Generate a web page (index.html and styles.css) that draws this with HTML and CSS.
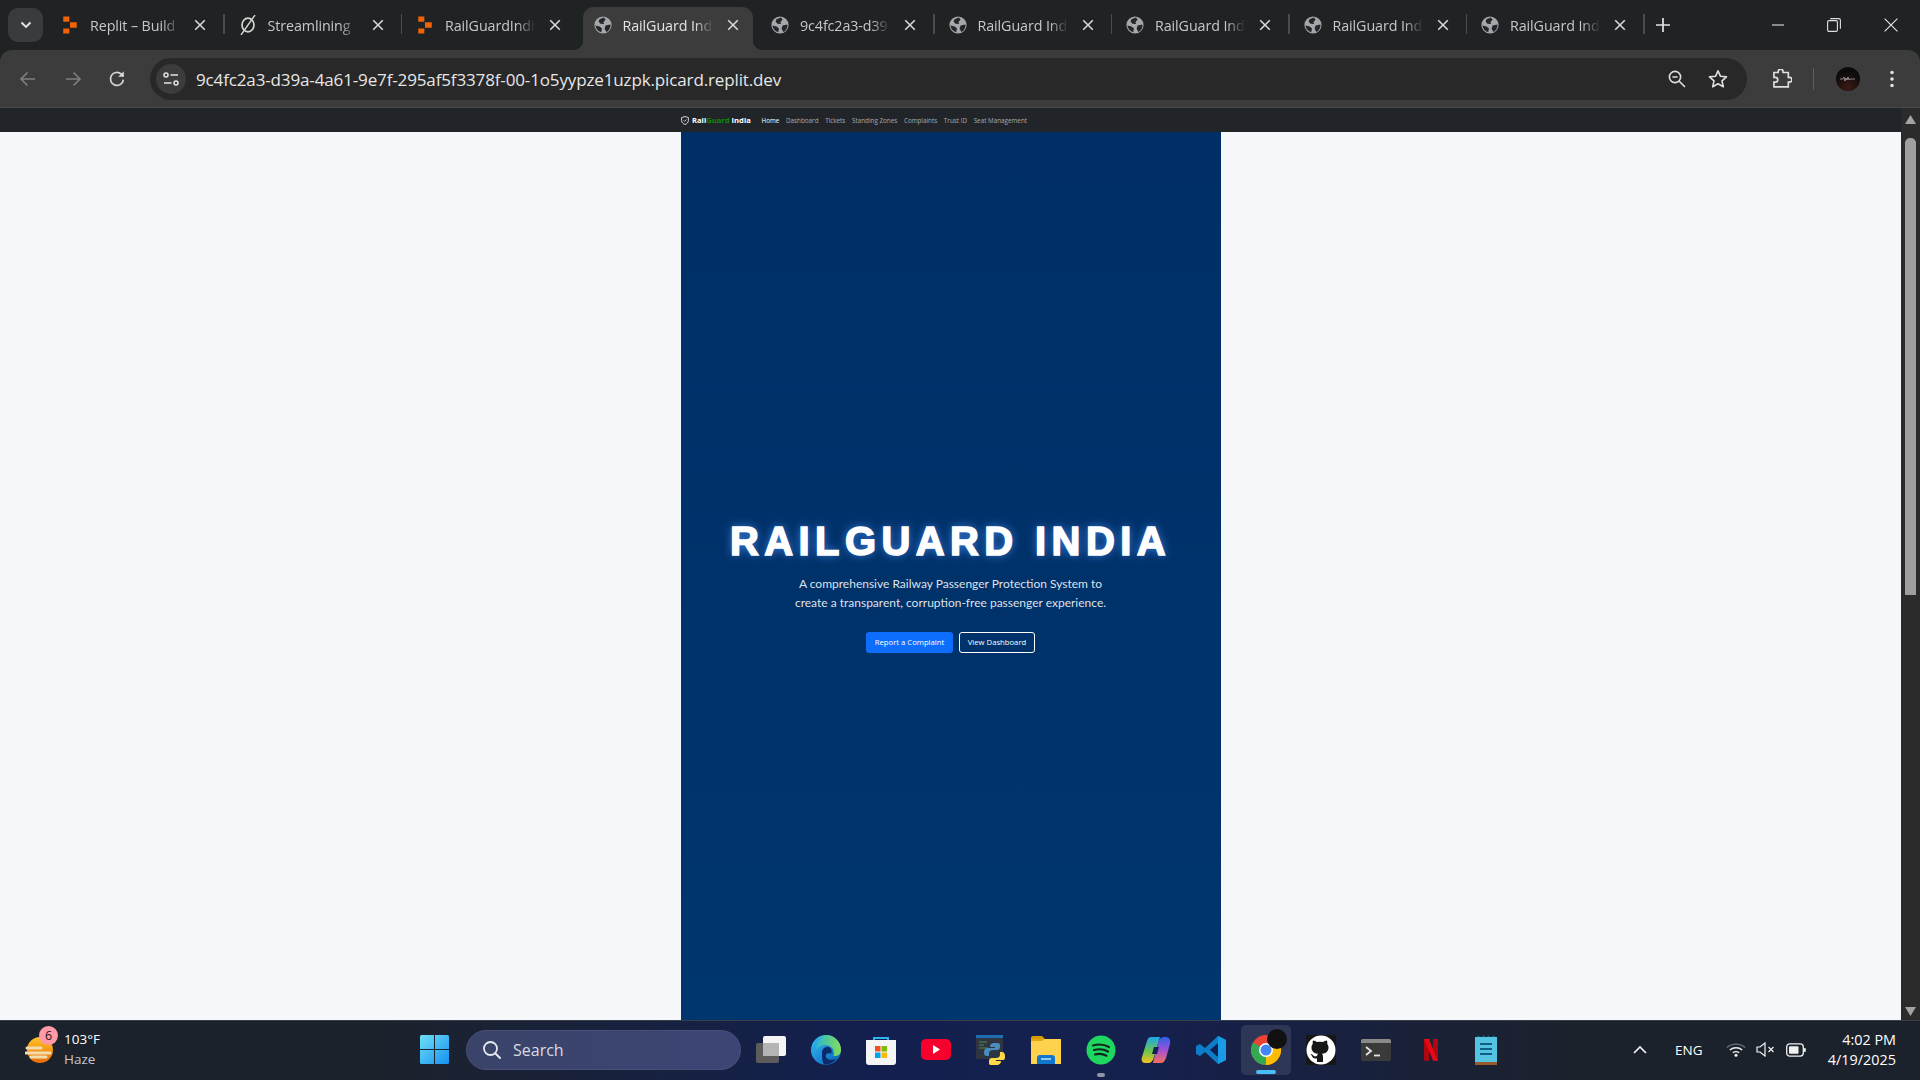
FILE: index.html
```html
<!DOCTYPE html>
<html lang="en">
<head>
<meta charset="utf-8">
<title>RailGuard India</title>
<link rel="stylesheet" href="styles.css">
</head>
<body>
<svg class="defs" width="0" height="0" aria-hidden="true">
  <symbol id="globe" viewBox="0 0 18 18">
    <circle cx="9" cy="9" r="8.6" fill="#a4a8ad"/>
    <path d="M5.500 3.200 9.800 1.400 11.600 3.600 9.400 6.200 10.200 8 6.400 7.800 4.600 5.600Z" fill="#23272a"/>
    <path d="M11.600 9.400 16.400 8.400C16.800 11.400 15 14.600 12.400 16L10.600 12.800Z" fill="#23272a"/>
    <path d="M1.400 9.600 5.600 10.400 8 12.600 7.200 16.300C4 15.500 1.800 13 1.400 9.600Z" fill="#23272a"/>
  </symbol>
  <symbol id="replit" viewBox="0 0 14 16">
    <path d="M1 .5h5.400v4.600H1zM7 5.600h6v4.800H7zM1 11h5.400v4.600H1z" fill="#f26207"/>
  </symbol>
  <symbol id="close" viewBox="0 0 12 12">
    <path d="M1.200 1.200 10.800 10.800M10.800 1.200 1.200 10.800" stroke="#d7d7d7" stroke-width="1.600" fill="none"/>
  </symbol>
</svg>

<header class="tabstrip">
  <button class="tab-search"><svg width="12" height="8" viewBox="0 0 12 8"><path d="M1.500 1.500 6 6l4.500-4.500" fill="none" stroke="#e4e4e4" stroke-width="1.900"/></svg></button>
  <div class="tab"><svg class="tab-icon" width="18" height="18"><use href="#replit"/></svg><span class="tab-title">Replit – Build</span><svg class="tab-close" width="12" height="12"><use href="#close"/></svg></div>
  <i class="tab-sep"></i>
  <div class="tab"><svg class="tab-icon" width="18" height="20" viewBox="0 0 18 20"><ellipse cx="9" cy="10" rx="6" ry="6.800" fill="none" stroke="#d4d4d4" stroke-width="1.700"/><path d="M16 0 2 20" stroke="#d4d4d4" stroke-width="1.400"/></svg><span class="tab-title">Streamlining</span><svg class="tab-close" width="12" height="12"><use href="#close"/></svg></div>
  <i class="tab-sep"></i>
  <div class="tab"><svg class="tab-icon" width="18" height="18"><use href="#replit"/></svg><span class="tab-title">RailGuardIndi</span><svg class="tab-close" width="12" height="12"><use href="#close"/></svg></div>
  <i class="tab-sep off"></i>
  <div class="tab active"><svg class="tab-icon" width="18" height="18"><use href="#globe"/></svg><span class="tab-title">RailGuard Ind</span><svg class="tab-close" width="12" height="12"><use href="#close"/></svg></div>
  <i class="tab-sep off"></i>
  <div class="tab"><svg class="tab-icon" width="18" height="18"><use href="#globe"/></svg><span class="tab-title">9c4fc2a3-d39</span><svg class="tab-close" width="12" height="12"><use href="#close"/></svg></div>
  <i class="tab-sep"></i>
  <div class="tab"><svg class="tab-icon" width="18" height="18"><use href="#globe"/></svg><span class="tab-title">RailGuard Ind</span><svg class="tab-close" width="12" height="12"><use href="#close"/></svg></div>
  <i class="tab-sep"></i>
  <div class="tab"><svg class="tab-icon" width="18" height="18"><use href="#globe"/></svg><span class="tab-title">RailGuard Ind</span><svg class="tab-close" width="12" height="12"><use href="#close"/></svg></div>
  <i class="tab-sep"></i>
  <div class="tab"><svg class="tab-icon" width="18" height="18"><use href="#globe"/></svg><span class="tab-title">RailGuard Ind</span><svg class="tab-close" width="12" height="12"><use href="#close"/></svg></div>
  <i class="tab-sep"></i>
  <div class="tab"><svg class="tab-icon" width="18" height="18"><use href="#globe"/></svg><span class="tab-title">RailGuard Ind</span><svg class="tab-close" width="12" height="12"><use href="#close"/></svg></div>
  <i class="tab-sep"></i>
  <svg class="tab-new" width="14" height="14" viewBox="0 0 14 14"><path d="M7 0v14M0 7h14" stroke="#e4e4e4" stroke-width="1.700"/></svg>
  <div class="window-controls">
    <svg width="12" height="12" viewBox="0 0 12 12"><path d="M0 6h12" stroke="#e0e0e0" stroke-width="1.100"/></svg>
    <svg width="14" height="14" viewBox="0 0 14 14"><rect x=".6" y="2.600" width="9.800" height="10.800" rx="1.400" fill="none" stroke="#e0e0e0" stroke-width="1.100"/><path d="M3.200.6h8.600a1.600 1.600 0 0 1 1.600 1.600v8.600" fill="none" stroke="#e0e0e0" stroke-width="1.100"/></svg>
    <svg width="14" height="14" viewBox="0 0 14 14"><path d="M.6.6l12.800 12.800M13.400.6.6 13.400" stroke="#e8e8e8" stroke-width="1.100"/></svg>
  </div>
</header>

<div class="toolbar">
  <div class="nav-buttons">
    <svg width="18" height="16" viewBox="0 0 18 16"><path d="M16 8H2M8.500 1.500 2 8l6.500 6.500" fill="none" stroke="#7d7d7d" stroke-width="1.700"/></svg>
    <svg width="18" height="16" viewBox="0 0 18 16"><path d="M2 8h14M9.500 1.500 16 8l-6.500 6.500" fill="none" stroke="#7d7d7d" stroke-width="1.700"/></svg>
    <svg width="18" height="18" viewBox="0 0 18 18"><path d="M15.400 9.600A6.500 6.500 0 1 1 13.400 4.200L15.600 6.200" fill="none" stroke="#d6d6d6" stroke-width="1.700"/><path d="M15.800 1.200v5.600h-5.600z" fill="#d6d6d6"/></svg>
  </div>
  <div class="omnibox">
    <span class="site-info"><svg width="16" height="14" viewBox="0 0 16 14"><circle cx="3" cy="3" r="2" fill="none" stroke="#e3e3e3" stroke-width="1.500"/><path d="M7.500 3H15M1 11h7.500" stroke="#e3e3e3" stroke-width="1.500"/><circle cx="13" cy="11" r="2" fill="none" stroke="#e3e3e3" stroke-width="1.500"/></svg></span>
    <span class="url">9c4fc2a3-d39a-4a61-9e7f-295af5f3378f-00-1o5yypze1uzpk.picard.replit.dev</span>
    <svg class="omni-zoom" width="18" height="18" viewBox="0 0 18 18"><circle cx="7" cy="7" r="5.600" fill="none" stroke="#e0e0e0" stroke-width="1.600"/><path d="M4.400 7h5.200M11 11l6 6" stroke="#e0e0e0" stroke-width="1.600"/></svg>
    <svg class="omni-star" width="20" height="20" viewBox="0 0 20 20"><path d="M10 1.800l2.500 5.500 6 .6-4.500 4 1.300 5.900L10 14.800l-5.300 3 1.300-5.900-4.500-4 6-.6z" fill="none" stroke="#e0e0e0" stroke-width="1.600" stroke-linejoin="round"/></svg>
  </div>
  <svg class="ext" width="20" height="20" viewBox="0 0 20 20"><path d="M2 4h4.500V3a2.500 2.500 0 0 1 5 0v1H17v5h1.200a2.500 2.500 0 0 1 0 5H17v5H2v-5h1.500a2.500 2.500 0 0 0 0-5H2z" transform="translate(0 -.3) scale(.96)" fill="none" stroke="#e0e0e0" stroke-width="1.700"/></svg>
  <i class="toolbar-sep"></i>
  <span class="avatar"><svg width="16" height="6" viewBox="0 0 16 6"><path d="M0 3h3l1-2 1 4 1-3 1 2 1-3 1 3 1-1h5" fill="none" stroke="#b9b9b9" stroke-width=".7"/></svg></span>
  <svg class="kebab" width="4" height="18" viewBox="0 0 4 18"><circle cx="2" cy="2.500" r="1.800" fill="#e0e0e0"/><circle cx="2" cy="9" r="1.800" fill="#e0e0e0"/><circle cx="2" cy="15.500" r="1.800" fill="#e0e0e0"/></svg>
</div>

<div class="viewport">
  <main class="page">
    <nav class="site-nav">
      <svg class="brand-icon" width="8" height="9" viewBox="0 0 8 9"><path d="M4 .5 7.400 1.600V4.500C7.400 6.500 5.800 7.900 4 8.500 2.200 7.900.6 6.500.6 4.500V1.600Z" fill="none" stroke="#fff" stroke-width=".8"/><path d="M2.600 4.300 3.700 5.400 5.500 3.400" fill="none" stroke="#fff" stroke-width=".7"/></svg>
      <span class="brand"><b class="rail">Rail</b><b class="guard">Guard</b> <b class="rail">India</b></span>
      <a class="nav-link current">Home</a>
      <a class="nav-link">Dashboard</a>
      <a class="nav-link">Tickets</a>
      <a class="nav-link">Standing Zones</a>
      <a class="nav-link">Complaints</a>
      <a class="nav-link">Trust ID</a>
      <a class="nav-link">Seat Management</a>
    </nav>
    <section class="canvas">
      <div class="hero">
        <h1 class="hero-title">RAILGUARD INDIA</h1>
        <p class="hero-sub">A comprehensive Railway Passenger Protection System to<br>create a transparent, corruption-free passenger experience.</p>
        <div class="hero-actions">
          <a class="btn btn-primary">Report a Complaint</a>
          <a class="btn btn-outline">View Dashboard</a>
        </div>
      </div>
    </section>
  </main>
  <aside class="scrollbar">
    <svg width="11" height="9" viewBox="0 0 11 9"><path d="M5.500 0 11 9H0z" fill="#a3a3a3"/></svg>
    <div class="scroll-track"><div class="scroll-thumb"></div></div>
    <svg width="11" height="9" viewBox="0 0 11 9"><path d="M5.500 9 11 0H0z" fill="#a3a3a3"/></svg>
  </aside>
</div>

<footer class="taskbar">
  <div class="weather">
    <span class="weather-icon">
      <svg width="28" height="28" viewBox="0 0 28 28"><defs><linearGradient id="sun" x1="0" y1="0" x2="0" y2="1"><stop offset="0" stop-color="#ffc526"/><stop offset="1" stop-color="#ea6a0a"/></linearGradient></defs><circle cx="15" cy="14" r="13" fill="url(#sun)"/><path d="M2 12h14M1 17h24M6 21h15" stroke="#f2dcae" stroke-width="3" stroke-linecap="round"/></svg>
      <b class="badge">6</b>
    </span>
    <span class="weather-text"><span class="temp">103°F</span><span class="cond">Haze</span></span>
  </div>
  <div class="task-center">
    <svg class="win" width="29" height="29" viewBox="0 0 29 29"><defs><linearGradient id="w1" x1="0" y1="0" x2="1" y2="1"><stop offset="0" stop-color="#6fe0f5"/><stop offset="1" stop-color="#1592f2"/></linearGradient></defs><path d="M0 1.500A1.500 1.500 0 0 1 1.500 0H14v14H0zM15 0h12.500A1.500 1.500 0 0 1 29 1.500V14H15zM0 15h14v14H1.500A1.500 1.500 0 0 1 0 27.500zM15 15h14v12.500a1.500 1.500 0 0 1-1.500 1.500H15z" fill="url(#w1)"/></svg>
    <div class="search"><svg width="20" height="20" viewBox="0 0 20 20"><circle cx="8.500" cy="8.500" r="6.500" fill="none" stroke="#e6e8ef" stroke-width="1.800"/><path d="M13.200 13.200 18 18" stroke="#e6e8ef" stroke-width="2" stroke-linecap="round"/></svg><span>Search</span></div>
    <div class="app"><svg width="30" height="30" viewBox="0 0 30 30"><rect x="0" y="8" width="23" height="20" rx="2" fill="#5c5c5c"/><rect x="7" y="1" width="23" height="20" rx="2" fill="#f4f4f4"/><rect x="7" y="8" width="16" height="13" fill="#b4b4b4"/></svg></div>
    <div class="app"><svg width="30" height="30" viewBox="0 0 30 30"><defs><linearGradient id="e1" x1="0" y1="0" x2="1" y2="1"><stop offset="0" stop-color="#35c1f1"/><stop offset=".6" stop-color="#1a83d4"/><stop offset="1" stop-color="#0c59a4"/></linearGradient><linearGradient id="e2" x1="0" y1="0" x2="1" y2="0"><stop offset="0" stop-color="#2bb9c9"/><stop offset="1" stop-color="#86dc5a"/></linearGradient></defs><circle cx="15" cy="15" r="15" fill="url(#e1)"/><path d="M15 0A15 15 0 0 1 30 15C30 20 26 21.500 22.500 21 24.500 15 20 9.500 14 10 9 10.500 6 13 5 15 6 7 10 0 15 0Z" fill="url(#e2)"/><path d="M11 18C11 13 15 11 18 12 21 13.500 21.500 17 20 18.500 17 17.500 14 19 15 22 16 25 21 25.500 25 24 22 28 17 30 13 29.500 11 26 11 22 11 18Z" fill="#0e2a6b"/></svg></div>
    <div class="app"><svg width="30" height="30" viewBox="0 0 30 30"><path d="M8 7V3h14v4" fill="none" stroke="#2cb6f0" stroke-width="2"/><path d="M0 5h30v22a3 3 0 0 1-3 3H3a3 3 0 0 1-3-3z" fill="#f5f5f5"/><rect x="9" y="11" width="5.500" height="5.500" fill="#f25022"/><rect x="15.500" y="11" width="5.500" height="5.500" fill="#7fba00"/><rect x="9" y="17.500" width="5.500" height="5.500" fill="#00a4ef"/><rect x="15.500" y="17.500" width="5.500" height="5.500" fill="#ffb900"/></svg></div>
    <div class="app"><svg width="30" height="22" viewBox="0 0 30 22"><rect width="30" height="21" rx="5" fill="#f8002e"/><path d="M12 6l7 4.500-7 4.500z" fill="#fff"/></svg></div>
    <div class="app"><svg width="30" height="30" viewBox="0 0 30 30"><rect width="27" height="24" fill="#2e3440"/><rect width="27" height="3" fill="#1f6fb0"/><path d="M3 7h8M3 10h5M3 13h9" stroke="#4f8a4a" stroke-width="1"/><path d="M19 8c-4 0-5 2-5 4h5v1h-7c-3 0-4 2-4 4 0 3 1 4 3 4h2v-3c0-2 2-3 4-3h4c2 0 3-1 3-3v-2c0-2-2-2-5-2z" fill="#4b8bbe"/><path d="M20 30c4 0 5-2 5-4h-5v-1h7c2 0 2-2 2-4s-1-4-3-4h-2v3c0 2-2 3-4 3h-4c-2 0-3 1-3 3v2c0 3 3 2 7 2z" fill="#ffd845"/></svg></div>
    <div class="app"><svg width="30" height="28" viewBox="0 0 30 28"><path d="M0 2a2 2 0 0 1 2-2h9l3 3H0z" fill="#d89b00"/><path d="M0 3h30v25H0z" fill="#ffd24d"/><path d="M0 3h14l-3 2H0z" fill="#e3a90f"/><path d="M6 28v-6a3 3 0 0 1 3-3h12a3 3 0 0 1 3 3v6z" fill="#0f78cc"/><path d="M10 23h10" stroke="#bde3ff" stroke-width="1.500"/></svg></div>
    <div class="app running"><svg width="30" height="30" viewBox="0 0 30 30"><circle cx="15" cy="15" r="14.500" fill="#1ed760"/><path d="M7 10.500c5-1.500 11.500-1 16 1.500M8 15c4.500-1.200 10-.8 14 1.500M9 19.500c3.600-1 8-.7 11.500 1.200" fill="none" stroke="#12261a" stroke-width="2.200" stroke-linecap="round"/></svg></div>
    <div class="app"><svg width="30" height="30" viewBox="0 0 30 30"><defs><linearGradient id="c1" x1="0" y1="0" x2="0" y2="1"><stop offset="0" stop-color="#1fa6ea"/><stop offset=".55" stop-color="#6cc64a"/><stop offset="1" stop-color="#f8bf22"/></linearGradient><linearGradient id="c2" x1="0" y1="0" x2="0" y2="1"><stop offset="0" stop-color="#2b63e8"/><stop offset=".5" stop-color="#a050d8"/><stop offset="1" stop-color="#f8705a"/></linearGradient></defs><path d="M10 2h9l-6 20c-1 4-3 6-6 6H4c-3 0-4-3-3-6L6 6c1-3 2-4 4-4Z" fill="url(#c1)"/><path d="M20 28h-8l5-20c1-4 3-6 6-6h2c3 0 5 3 4 7l-4 14c-1 3-3 5-5 5Z" fill="url(#c2)"/><path d="M13 12h5l-2 7h-5z" fill="#14205a"/></svg></div>
    <div class="app"><svg width="30" height="30" viewBox="0 0 30 30"><path d="M22 1 30 5v20l-8 4L9 17l-5 4-4-2v-8l4-2 5 4Z" fill="#0e7dc9"/><path d="M22 1 30 5v20l-8 4z" fill="#1a9be6"/><path d="M22 8 14 15l8 7z" fill="#0e2050"/></svg></div>
    <div class="app chrome-app"><span class="chrome-tile"><svg width="30" height="30" viewBox="0 0 30 30"><circle cx="15" cy="15" r="15" fill="#ea4335"/><path d="M15 15 2 7.500A15 15 0 0 0 15 30z" fill="#34a853"/><path d="M15 15 28 7.500A15 15 0 0 1 15 30z" fill="#fbbc05"/><circle cx="15" cy="15" r="7" fill="#fff"/><circle cx="15" cy="15" r="5.500" fill="#4285f4"/></svg><i class="chrome-badge"></i><i class="chrome-active"></i></span></div>
    <div class="app"><svg width="30" height="30" viewBox="0 0 30 30"><rect width="30" height="30" fill="#171717"/><circle cx="15" cy="15" r="14.500" fill="#fff"/><path d="M11 27v-3.500c-3.500.5-4.500-1-5-2.500-.5-1-1-1.500-1.500-2 1-.3 2 .3 2.800 1.600.7 1 2.200 1 3.700.4.100-1 .5-1.700 1-2.200-4-.5-6.500-2.300-6.500-6.300 0-1.400.5-2.600 1.300-3.500-.2-.8-.3-2 .3-3.500 1.500 0 2.800.8 3.800 1.600a12 12 0 0 1 6.200 0c1-.8 2.300-1.600 3.800-1.600.6 1.500.5 2.700.3 3.500.8.900 1.300 2.100 1.300 3.500 0 4-2.500 5.800-6.500 6.300.6.600 1 1.500 1 3V27z" fill="#171717"/></svg></div>
    <div class="app"><svg width="30" height="22" viewBox="0 0 30 22"><rect width="30" height="22" rx="2" fill="#3a3a3a"/><path d="M0 2a2 2 0 0 1 2-2h26a2 2 0 0 1 2 2v2H0z" fill="#8a8a8a"/><path d="M5 8l5 4-5 4" fill="none" stroke="#e4e4e4" stroke-width="1.800"/><path d="M13 16.500h6" stroke="#e4e4e4" stroke-width="1.800"/></svg></div>
    <div class="app"><svg width="14" height="22" viewBox="0 0 14 22"><path d="M0 0h5v22l-5-.7zM9 0h5v21.300L9 22z" fill="#b1060f"/><path d="M0 0h5l9 22-5-.6z" fill="#e50914"/></svg></div>
    <div class="app"><svg width="22" height="30" viewBox="0 0 22 30"><rect y="2" width="22" height="26" fill="#55c3e2"/><rect y="27" width="22" height="3" fill="#9a5a2c"/><path d="M2 2a1.500 1.500 0 0 1 3 0M7 2a1.500 1.500 0 0 1 3 0M12 2a1.500 1.500 0 0 1 3 0M17 2a1.500 1.500 0 0 1 3 0" fill="#0e5f86"/><path d="M5 9h12M5 14h12M5 19h12" stroke="#115f88" stroke-width="1.800"/></svg></div>
  </div>
  <div class="tray">
    <svg class="tray-chev" width="14" height="9" viewBox="0 0 14 9"><path d="M1 8 7 2l6 6" fill="none" stroke="#f0f0f0" stroke-width="1.700"/></svg>
    <span class="lang">ENG</span>
    <svg class="tray-wifi" width="20" height="15" viewBox="0 0 20 15"><path d="M1 5.500C6 1 14 1 19 5.500" fill="none" stroke="#6c7078" stroke-width="1.400"/><path d="M3.800 8c3.500-3 9-3 12.400 0M6.800 10.800c2-1.500 4.400-1.500 6.400 0" fill="none" stroke="#f0f0f0" stroke-width="1.400"/><circle cx="10" cy="13.300" r="1.500" fill="#f0f0f0"/></svg>
    <svg class="tray-vol" width="20" height="15" viewBox="0 0 20 15"><path d="M1 5h3l5-4v13l-5-4H1z" fill="none" stroke="#f0f0f0" stroke-width="1.200"/><path d="M12.500 5l5 5M17.500 5l-5 5" stroke="#f0f0f0" stroke-width="1.200"/></svg>
    <svg class="tray-bat" width="20" height="14" viewBox="0 0 20 14"><rect x=".7" y=".9" width="16.600" height="12.200" rx="3" fill="none" stroke="#f0f0f0" stroke-width="1.300"/><rect x="3" y="3.200" width="9.500" height="7.600" rx="1" fill="#f0f0f0"/><rect x="18" y="5" width="1.800" height="4" rx=".8" fill="#f0f0f0"/></svg>
    <span class="clock"><span>4:02 PM</span><span>4/19/2025</span></span>
  </div>
</footer>
</body>
</html>
```

FILE: styles.css
```css
* { box-sizing: border-box; }
html, body { margin: 0; height: 100%; overflow: hidden; }
body {
  display: flex;
  flex-direction: column;
  height: 1080px;
  font-family: "Open Sans", "Noto Sans", sans-serif;
  background: #202324;
}
.defs { position: absolute; }

/* Browser tab strip */
.tabstrip {
  height: 50px;
  flex: none;
  display: flex;
  align-items: flex-end;
  padding-left: 8px;
  background: #202324;
}
.tab-search {
  width: 35px;
  height: 34px;
  margin: 0 4px 8px 0;
  border: 0;
  padding: 0;
  border-radius: 10px;
  background: #3a3b3c;
  display: flex;
  align-items: center;
  justify-content: center;
}
.tab {
  width: 176px;
  height: 43px;
  display: flex;
  align-items: center;
  padding: 0 0 7px 14px;
  flex: none;
  position: relative;
}
.tab-icon { flex: none; }
.tab-title {
  width: 94px;
  flex: none;
  margin-left: 11px;
  font-size: 14.300px;
  letter-spacing: -.1px;
  color: #c6c7c8;
  white-space: nowrap;
  -webkit-mask-image: linear-gradient(90deg, #000 76%, transparent 96%);
  mask-image: linear-gradient(90deg, #000 76%, transparent 96%);
}
.tab-close { margin-left: 10px; flex: none; }
.tab.active {
  width: 170px;
  margin: 0 3px;
  padding-left: 11px;
  background: #3c3c3c;
  border-radius: 11px 11px 0 0;
}
.tab.active .tab-title { color: #e3e3e3; }
.tab.active::before,
.tab.active::after {
  content: "";
  position: absolute;
  bottom: 0;
  width: 10px;
  height: 10px;
}
.tab.active::before { left: -10px; background: radial-gradient(circle at 0 0, transparent 10px, #3c3c3c 10.500px); }
.tab.active::after { right: -10px; background: radial-gradient(circle at 100% 0, transparent 10px, #3c3c3c 10.500px); }
.tab-sep {
  flex: none;
  width: 1.500px;
  height: 20px;
  margin-bottom: 16px;
  background: #4a4c4d;
}
.tab-sep.off { background: transparent; }
.tab-new { margin: 0 0 18px 11.500px; flex: none; }
.window-controls {
  margin-left: auto;
  display: flex;
  align-items: center;
  gap: 43px;
  padding: 0 22px 18px 0;
}

/* Browser toolbar */
.toolbar {
  height: 58px;
  flex: none;
  display: flex;
  align-items: center;
  padding: 1px 0 0 19px;
  background: #3c3c3c;
  border-radius: 12px 12px 0 0;
  border-bottom: 1px solid #4a4a4a;
}
.nav-buttons { display: flex; align-items: center; gap: 26.500px; width: 131px; flex: none; }
.omnibox {
  width: 1597px;
  height: 42px;
  flex: none;
  display: flex;
  align-items: center;
  border-radius: 21px;
  background: #282828;
  padding-left: 6px;
}
.site-info {
  width: 30px;
  height: 30px;
  flex: none;
  border-radius: 50%;
  background: #3c3c3c;
  display: flex;
  align-items: center;
  justify-content: center;
}
.url {
  margin-left: 10px;
  width: 1347px;
  flex: none;
  font-size: 17.050px;
  letter-spacing: -.15px;
  color: #e6e6e6;
  white-space: nowrap;
}
.omni-zoom { margin-left: 125px; flex: none; }
.omni-star { margin-left: 22px; flex: none; }
.ext { margin-left: 25px; flex: none; }
.toolbar-sep { width: 1px; height: 22px; margin-left: 21px; background: #5f5f5f; flex: none; }
.avatar {
  width: 24px;
  height: 24px;
  margin-left: 22px;
  flex: none;
  border-radius: 50%;
  background: radial-gradient(circle at 50% 85%, #3a1a14, #0a0a0a 70%);
  display: flex;
  align-items: center;
  justify-content: center;
}
.kebab { margin-left: 30px; flex: none; }

/* Page area */
.viewport { flex: 1; min-height: 0; display: flex; }
.page { flex: 1; min-width: 0; display: flex; flex-direction: column; }
.site-nav {
  height: 24px;
  flex: none;
  display: flex;
  align-items: center;
  padding-left: 681px;
  background: #212529;
  font-size: 6.300px;
}
.brand-icon { flex: none; }
.brand { margin-left: 3px; font-size: 7.600px; white-space: nowrap; width: 69.500px; }
.rail { color: #fff; font-weight: 700; }
.guard { color: #138808; font-weight: 700; }
.nav-link { color: rgba(255, 255, 255, .6); margin-right: 6.700px; white-space: nowrap; }
.nav-link.current { color: #fff; font-weight: 500; }

.canvas { flex: 1; display: flex; justify-content: center; background: #f5f7fb; }
.hero {
  width: 540px;
  display: flex;
  flex-direction: column;
  align-items: center;
  padding-top: 385px;
  background: linear-gradient(180deg, #002f67, #00356e);
  color: #fff;
  text-align: center;
}
.hero-title {
  margin: 0;
  font-family: "Liberation Sans", Arial, sans-serif;
  font-size: 40px;
  line-height: 48px;
  font-weight: 700;
  letter-spacing: 5.400px;
  white-space: nowrap;
  -webkit-text-stroke: 1.500px #fff;
  text-shadow: 0 0 10px rgba(77, 148, 255, .9);
}
.hero-sub {
  margin: 9px 0 0;
  font-family: Lato, "Open Sans", sans-serif;
  font-size: 12px;
  line-height: 19px;
  color: rgba(255, 255, 255, .88);
  white-space: nowrap;
}
.hero-actions { display: flex; gap: 6px; margin-top: 20px; }
.btn {
  height: 21px;
  display: flex;
  align-items: center;
  justify-content: center;
  padding-bottom: 1px;
  font-size: 7.700px;
  font-weight: 500;
  color: #fff;
  border-radius: 3px;
  white-space: nowrap;
}
.btn-primary { width: 87px; background: #0d6efd; }
.btn-outline { width: 76px; border: 1px solid #fff; }

.scrollbar {
  width: 19px;
  flex: none;
  background: #2b2b2b;
  display: flex;
  flex-direction: column;
  align-items: center;
  padding: 7px 0 4px;
}
.scroll-track { flex: 1; width: 100%; display: flex; justify-content: center; padding-top: 14px; }
.scroll-thumb { width: 11px; height: 457px; border-radius: 5px 5px 0 0; background: #9f9f9f; }

/* Windows taskbar */
.taskbar {
  height: 60px;
  flex: none;
  display: flex;
  align-items: center;
  padding-bottom: 2px;
  color: #fff;
  border-top: 1px solid #3a3f4a;
  background: linear-gradient(90deg, #1c222c 0, #1c222c 20%, #13204f 45%, #15204d 60%, #1c222c 82%, #1c222c 100%);
}
.weather { width: 420px; flex: none; display: flex; align-items: center; padding-left: 25px; }
.weather-icon { position: relative; width: 28px; height: 28px; flex: none; }
.badge {
  position: absolute;
  top: -10px;
  left: 14px;
  width: 19px;
  height: 19px;
  border-radius: 50%;
  background: #ff9aa6;
  color: #1b1b1b;
  font-size: 12.500px;
  font-weight: 400;
  line-height: 19px;
  text-align: center;
}
.weather-text { display: flex; flex-direction: column; margin-left: 11px; }
.temp { font-size: 13.500px; line-height: 20px; }
.cond { font-size: 13.500px; line-height: 21px; color: #c4c7cd; }
.task-center { display: flex; align-items: center; flex: none; }
.win { flex: none; }
.search {
  width: 275px;
  height: 40px;
  margin-left: 17px;
  flex: none;
  display: flex;
  align-items: center;
  gap: 11px;
  padding-left: 15px;
  border-radius: 20px;
  border: 1px solid #48507a;
  background: linear-gradient(90deg, #3a4368, #3c4575);
  color: #d9dbe2;
  font-size: 16px;
}
.app {
  width: 55px;
  height: 58px;
  flex: none;
  display: flex;
  align-items: center;
  justify-content: center;
  position: relative;
}
.app.running::after {
  content: "";
  position: absolute;
  bottom: 2px;
  left: 24px;
  width: 8px;
  height: 3.500px;
  border-radius: 2px;
  background: #8f95a3;
}
.search + .app { margin-left: 2px; }
.chrome-tile {
  width: 50px;
  height: 50px;
  border-radius: 5px;
  background: rgba(255, 255, 255, .1);
  display: flex;
  align-items: center;
  justify-content: center;
  position: relative;
}
.chrome-badge {
  position: absolute;
  top: 4px;
  right: 4px;
  width: 20px;
  height: 20px;
  border-radius: 50%;
  background: #111;
}
.chrome-active {
  position: absolute;
  bottom: 1px;
  left: 15px;
  width: 20px;
  height: 4px;
  border-radius: 2px;
  background: #48bdf8;
}
.tray { flex: 1; display: flex; align-items: center; padding-left: 120px; }
.tray-chev { flex: none; }
.lang { margin-left: 28px; font-size: 13.500px; }
.tray-wifi { margin-left: 24px; flex: none; }
.tray-vol { margin-left: 10px; flex: none; }
.tray-bat { margin-left: 10px; flex: none; }
.clock {
  margin-left: auto;
  margin-right: 24px;
  display: flex;
  flex-direction: column;
  align-items: flex-end;
  font-size: 14.400px;
  line-height: 20px;
}
```
